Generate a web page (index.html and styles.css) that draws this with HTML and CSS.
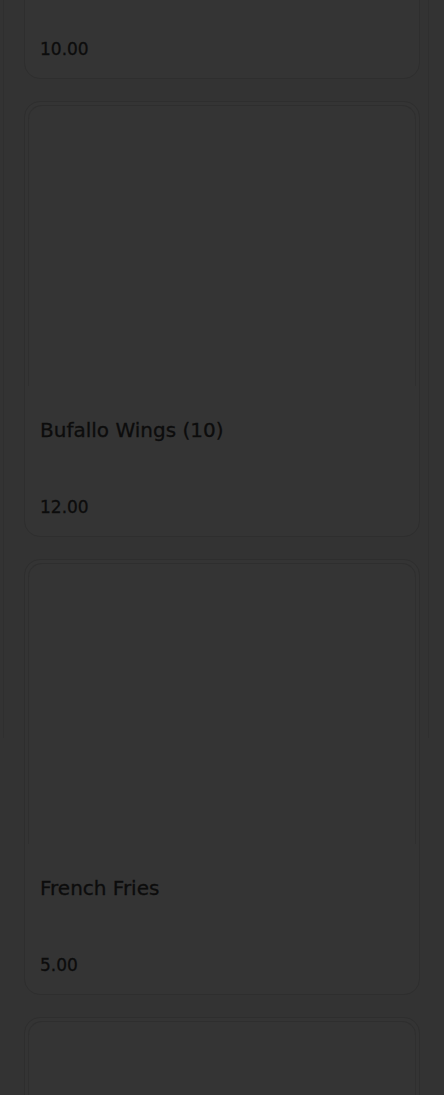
FILE: index.html
```html
<!DOCTYPE html>
<html lang="en">
<head>
  <meta charset="UTF-8">
  <meta name="viewport" content="width=device-width, initial-scale=1.0">
  <title>Menu</title>
  <link rel="stylesheet" href="styles.css">
</head>
<body>
  <div class="page">
    <div class="menu">
      <div class="item">
        <div class="photo"></div>
        <div class="name">Mozzarella Sticks</div>
        <div class="price">10.00</div>
      </div>
      <div class="item">
        <div class="photo"></div>
        <div class="name">Bufallo Wings (10)</div>
        <div class="price">12.00</div>
      </div>
      <div class="item">
        <div class="photo"></div>
        <div class="name">French Fries</div>
        <div class="price">5.00</div>
      </div>
      <div class="item">
        <div class="photo"></div>
        <div class="name">Onion Rings</div>
        <div class="price">6.00</div>
      </div>
    </div>
  </div>
</body>
</html>
```

FILE: styles.css
```css
body {
  margin: 0;
  background: #333;
  font-family: "DejaVu Sans", "Open Sans", sans-serif;
  color: #0c0c0c;
  overflow: hidden;
  height: 1095px;
}
.page {
  margin: 0 15px 0 3px;
  border-left: 1px solid #2f2f2f;
  border-right: 1px solid #2f2f2f;
  padding: 0 8px 0 20px;
  height: 1095px;
}
.menu {
  display: flex;
  flex-direction: column;
  gap: 22px;
  margin-top: -357px;
}
.item {
  height: 436px;
  box-sizing: border-box;
  background: #343434;
  border: 1px solid #2e2e2e;
  border-radius: 16px;
  display: flex;
  flex-direction: column;
}
.photo {
  height: 280px;
  margin: 3px 3px 0;
  border-top: 1px solid #2e2e2e;
  border-left: 1px solid #2f2f2f;
  border-right: 1px solid #2f2f2f;
  border-radius: 14px 14px 0 0;
}
.name {
  margin-top: 30px;
  padding: 0 15px;
  font-size: 20px;
  line-height: 28px;
  -webkit-text-stroke: 0.3px #0c0c0c;
}
.price {
  margin-top: auto;
  padding: 0 15px 17px;
  font-size: 17px;
  line-height: 24px;
  -webkit-text-stroke: 0.3px #0c0c0c;
}
```
